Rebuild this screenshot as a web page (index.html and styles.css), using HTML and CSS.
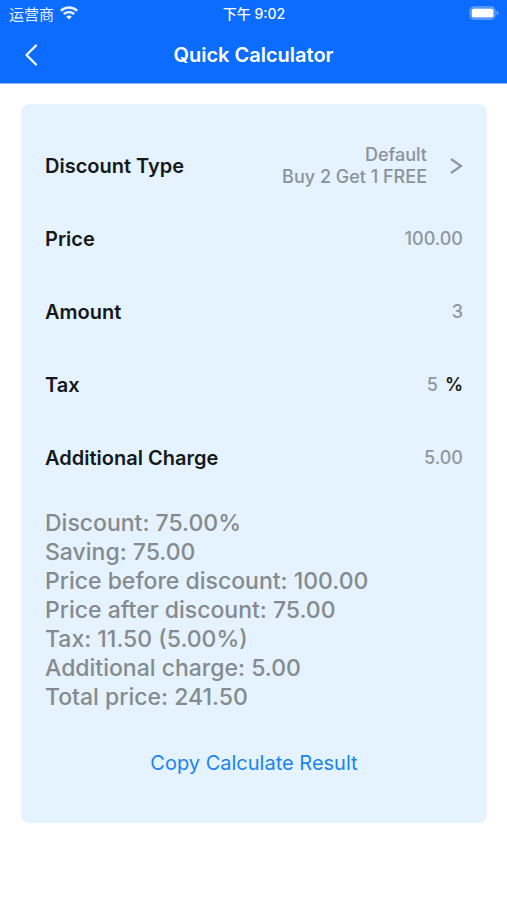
FILE: index.html
```html
<!DOCTYPE html>
<html lang="en">
<head>
    <meta charset="UTF-8">
    <meta name="viewport" content="width=device-width, initial-scale=1.0">
    <title>Quick Calculator</title>
    <link rel="stylesheet" href="styles.css">
</head>
<body>
    <header class="header">
        <div class="status-bar">
            <div class="carrier">
                <span lang="zh">运营商</span>
                <svg class="wifi" viewBox="0 0 18 14" aria-hidden="true">
                    <path d="M0.9 4.9 A11.5 11.5 0 0 1 17.1 4.9" fill="none" stroke="#fff" stroke-width="2.6"/>
                    <path d="M3.8 8.2 A7.3 7.3 0 0 1 14.2 8.2" fill="none" stroke="#fff" stroke-width="2.4"/>
                    <path d="M9 13.6 L6.1 10.7 A4 4 0 0 1 11.9 10.7 Z" fill="#fff"/>
                </svg>
            </div>
            <span class="time" lang="zh">下午 9:02</span>
            <svg class="battery" viewBox="0 0 30 14" aria-hidden="true">
                <rect x="1" y="1" width="25" height="12" rx="4" fill="none" stroke="#fff" stroke-opacity="0.4" stroke-width="1.3"/>
                <rect x="2.6" y="2.4" width="22" height="9.2" rx="2.2" fill="#fff"/>
                <path d="M27.6 4.8 Q29.6 5.4 29.6 7 Q29.6 8.6 27.6 9.2 Z" fill="#fff" fill-opacity="0.45"/>
            </svg>
        </div>
        <nav class="nav-bar">
            <button class="back" type="button" aria-label="Back">
                <svg viewBox="0 0 14 22" aria-hidden="true">
                    <path d="M12 1.5 L2.5 11 L12 20.5" fill="none" stroke="#fff" stroke-width="2.2" stroke-linecap="round" stroke-linejoin="round"/>
                </svg>
            </button>
            <h1>Quick Calculator</h1>
        </nav>
    </header>
    <main class="card">
        <form>
            <div class="row">
                <span class="label" id="typeLabel">Discount Type</span>
                <button class="picker" type="button" aria-labelledby="typeLabel typeValue">
                    <span id="typeValue">Default<br>Buy 2 Get 1 FREE</span>
                    <svg class="chevron" viewBox="0 0 14 18" aria-hidden="true">
                        <path d="M2 2 L12 9 L2 16" fill="none" stroke="#8e979e" stroke-width="2.2"/>
                    </svg>
                </button>
            </div>
            <div class="row">
                <label class="label" for="price">Price</label>
                <input type="text" id="price" value="100.00">
            </div>
            <div class="row">
                <label class="label" for="amount">Amount</label>
                <input type="text" id="amount" value="3">
            </div>
            <div class="row">
                <label class="label" for="tax">Tax</label>
                <input type="text" id="tax" value="5">
                <span class="unit">%</span>
            </div>
            <div class="row">
                <label class="label" for="charge">Additional Charge</label>
                <input type="text" id="charge" value="5.00">
            </div>
        </form>
        <div class="results">
            <p>Discount: 75.00%</p>
            <p>Saving: 75.00</p>
            <p>Price before discount: 100.00</p>
            <p>Price after discount: 75.00</p>
            <p>Tax: 11.50 (5.00%)</p>
            <p>Additional charge: 5.00</p>
            <p>Total price: 241.50</p>
        </div>
        <button class="copy" type="button">Copy Calculate Result</button>
    </main>
</body>
</html>
```
FILE: styles.css
```css
* {
    box-sizing: border-box;
}
body {
    font-family: Inter, "Noto Sans CJK SC", sans-serif;
    background-color: #fff;
    color: #15181b;
    margin: 0;
}
button {
    font-family: inherit;
    background: none;
    border: none;
    padding: 0;
    cursor: pointer;
}
svg {
    display: block;
}
.header {
    background-color: #0b6cff;
    color: #fff;
    border-bottom: 1px solid #85b5ff;
}
.status-bar {
    display: grid;
    grid-template-columns: 1fr auto 1fr;
    align-items: center;
    height: 26px;
    padding: 0 8px 0 9px;
    font-size: 14px;
}
.carrier {
    display: flex;
    align-items: center;
    gap: 6px;
    font-size: 15px;
    opacity: 0.9;
}
.wifi {
    width: 18px;
    height: 14px;
}
.time {
    font-weight: 500;
}
.battery {
    width: 30px;
    height: 14px;
    justify-self: end;
}
.nav-bar {
    display: grid;
    grid-template-columns: 1fr auto 1fr;
    align-items: center;
    height: 57px;
    padding: 0 24px;
}
.back {
    justify-self: start;
}
.back svg {
    width: 14px;
    height: 22px;
}
h1 {
    margin: 0;
    font-size: 20px;
    font-weight: 600;
}
.card {
    margin: 20px 20px 20px 21px;
    padding: 25px 24px 40px;
    background-color: #e4f3ff;
    border-radius: 8px;
}
.row {
    display: flex;
    align-items: center;
    height: 73px;
}
.label {
    flex-shrink: 0;
    font-size: 20px;
    font-weight: 600;
}
.row input {
    flex: 1;
    min-width: 0;
    padding: 0;
    border: none;
    background: none;
    color: #8e979e;
    font-family: inherit;
    font-size: 18px;
    font-weight: 500;
    text-align: right;
}
.unit {
    margin-left: 7px;
    font-size: 18px;
    font-weight: 600;
}
.picker {
    display: flex;
    align-items: center;
    gap: 22px;
    margin-left: auto;
    color: #8a9299;
    font-size: 18px;
    font-weight: 500;
    line-height: 22px;
    text-align: right;
}
.chevron {
    width: 14px;
    height: 18px;
}
.results {
    margin-top: 15px;
    color: #868a8e;
    font-size: 23px;
    font-weight: 500;
    line-height: 29px;
}
.results p {
    margin: 0;
}
.copy {
    display: block;
    margin: 31px auto 0;
    color: #1a84f0;
    font-size: 20px;
    line-height: 40px;
}
```
